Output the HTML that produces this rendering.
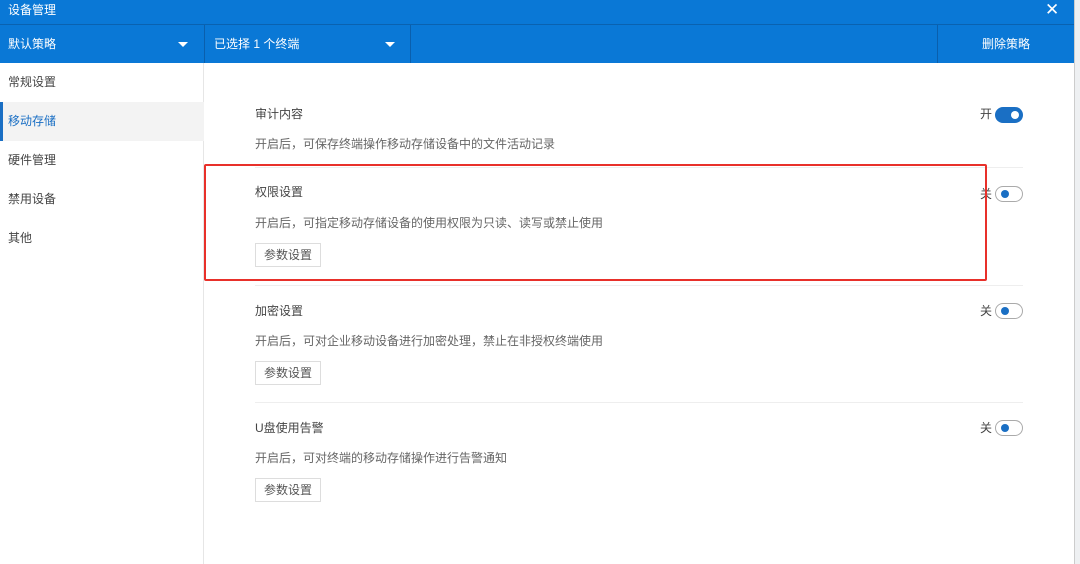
<!DOCTYPE html>
<html><head><meta charset="utf-8"><style>
*{margin:0;padding:0;box-sizing:border-box}
body{width:1080px;height:564px;overflow:hidden;background:#fff;font-family:"Liberation Sans","Noto Sans CJK SC",sans-serif;font-size:12px;color:#333;position:relative}
.a{position:absolute;line-height:14px}
.hdr{left:0;top:0;width:1074px;height:25px;background:#0a78d6;border-bottom:1px solid #0a62b0;color:#fff}
.bar{left:0;top:25px;width:1074px;height:38px;background:#0a78d6;color:#fff}
.vd{top:25px;width:1px;height:38px;background:#0a5fad}
.tri{width:0;height:0;border-left:5px solid transparent;border-right:5px solid transparent;border-top:5px solid #fff}
.side{left:0;top:63px;width:204px;height:501px;border-right:1px solid #e6e6e6}
.it{left:0;width:204px;height:39px;line-height:39px;padding-left:8px;color:#444}
.t{left:255px;color:#444}
.d{left:255px;color:#666}
.btn{left:255px;width:66px;height:24px;border:1px solid #ddd;line-height:22px;text-align:center;color:#555;background:#fff}
.sep{left:255px;width:768px;height:1px;background:#eee}
.tg{left:995px;width:28px;height:16px;border-radius:8px}
.on{background:#1a6fc4}
.on::after{content:"";position:absolute;right:4px;top:4px;width:8px;height:8px;border-radius:50%;background:#fff}
.off{border:1px solid #aaa;background:#fff}
.off::after{content:"";position:absolute;left:5px;top:3px;width:8px;height:8px;border-radius:50%;background:#1a6fc4}
.lab{left:980px;color:#444}
</style></head><body>
<div class="a hdr"><span class="a" style="left:8px;top:3px">设备管理</span><span class="a" style="left:1045px;top:1px;font-size:17px;line-height:18px">✕</span></div>
<div class="a bar">
<span class="a" style="left:8px;top:12px">默认策略</span><div class="a tri" style="left:178px;top:17px"></div>
<span class="a" style="left:214px;top:12px">已选择 1 个终端</span><div class="a tri" style="left:385px;top:17px"></div>
<span class="a" style="left:982px;top:12px">删除策略</span>
</div>
<div class="a vd" style="left:204px"></div><div class="a vd" style="left:410px"></div><div class="a vd" style="left:937px"></div>
<div class="a" style="left:1074px;top:0;width:6px;height:564px;background:#eef0f2;border-left:1px solid #ccc"></div>
<div class="a side">
<div class="a it" style="top:0;line-height:39px">常规设置</div>
<div class="a it" style="top:39px;background:#f3f3f3;color:#1a6fc4;border-left:3px solid #1a6fc4;padding-left:5px;line-height:39px">移动存储</div>
<div class="a it" style="top:78px;line-height:39px">硬件管理</div>
<div class="a it" style="top:117px;line-height:39px">禁用设备</div>
<div class="a it" style="top:156px;line-height:39px">其他</div>
</div>
<span class="a t" style="top:107px">审计内容</span><span class="a d" style="top:137px">开启后，可保存终端操作移动存储设备中的文件活动记录</span>
<span class="a lab" style="top:107px">开</span><div class="a tg on" style="top:107px"></div>
<div class="a sep" style="top:167px"></div>
<span class="a t" style="top:185px">权限设置</span><span class="a d" style="top:216px">开启后，可指定移动存储设备的使用权限为只读、读写或禁止使用</span>
<div class="a btn" style="top:243px;line-height:22px">参数设置</div>
<span class="a lab" style="top:187px">关</span><div class="a tg off" style="top:186px"></div>
<div class="a sep" style="top:285px"></div>
<span class="a t" style="top:304px">加密设置</span><span class="a d" style="top:334px">开启后，可对企业移动设备进行加密处理，禁止在非授权终端使用</span>
<div class="a btn" style="top:361px;line-height:22px">参数设置</div>
<span class="a lab" style="top:304px">关</span><div class="a tg off" style="top:303px"></div>
<div class="a sep" style="top:402px"></div>
<span class="a t" style="top:421px">U盘使用告警</span><span class="a d" style="top:451px">开启后，可对终端的移动存储操作进行告警通知</span>
<div class="a btn" style="top:478px;line-height:22px">参数设置</div>
<span class="a lab" style="top:421px">关</span><div class="a tg off" style="top:420px"></div>
<div class="a" style="left:204px;top:164px;width:783px;height:117px;border:2px solid #e8302a;border-radius:2px"></div>
</body></html>
